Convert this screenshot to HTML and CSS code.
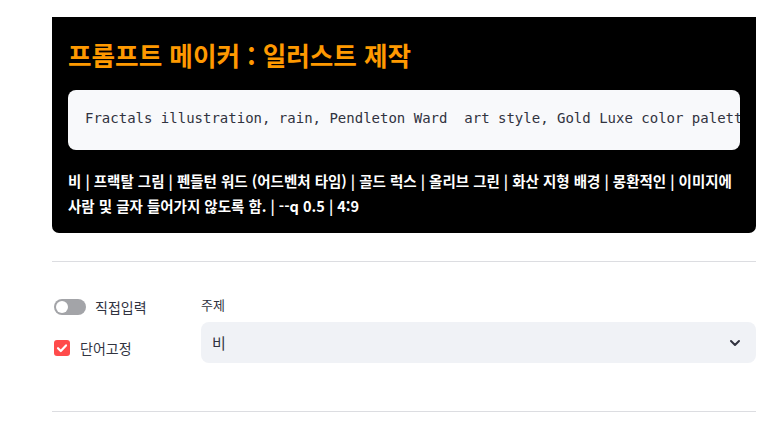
FILE: index.html
```html
<!DOCTYPE html>
<html lang="ko">
<head>
<meta charset="utf-8">
<link rel="stylesheet" href="styles.css">
</head>
<body>
<div class="page">
  <section class="card">
    <h1 class="title">프롬프트 메이커 : 일러스트 제작</h1>
    <pre class="code"><code>Fractals illustration, rain, Pendleton Ward  art style, Gold Luxe color palette, olive green</code></pre>
    <p class="desc">비 | 프랙탈 그림 | 펜들턴 워드 (어드벤처 타임) | 골드 럭스 | 올리브 그린 | 화산 지형 배경 | 몽환적인 | 이미지에 사람 및 글자 들어가지 않도록 함. | --q 0.5 | 4:9</p>
  </section>
  <div class="divider"></div>
  <div class="controls">
    <div class="left">
      <label class="toggle-row">
        <span class="toggle"><span class="knob"></span></span>
        <span class="opt">직접입력</span>
      </label>
      <label class="check-row">
        <span class="checkbox">
          <svg width="16" height="16" viewBox="0 0 16 16"><path d="M4 8.2 L6.8 11 L12 5.4" fill="none" stroke="#fff" stroke-width="2.2" stroke-linecap="round" stroke-linejoin="round"/></svg>
        </span>
        <span class="opt">단어고정</span>
      </label>
    </div>
    <div class="right">
      <div class="label">주제</div>
      <div class="select">
        <span class="value">비</span>
        <svg class="chev" width="12" height="8" viewBox="0 0 12 8"><path d="M2 2 L6 6 L10 2" fill="none" stroke="#31333f" stroke-width="2" stroke-linecap="round" stroke-linejoin="round"/></svg>
      </div>
    </div>
  </div>
  <div class="divider divider2"></div>
</div>
</body>
</html>
```

FILE: styles.css
```css
* { box-sizing: border-box; }
html, body { margin: 0; padding: 0; background: #fff; }
body {
  font-family: "Noto Sans CJK KR", "Noto Sans", sans-serif;
  color: #31333f;
}
.page {
  width: 780px;
  padding: 17px 24px 0 52px;
}
.card {
  background: #000;
  border-radius: 0 0 7px 7px;
  padding: 22px 16px 15px 16px;
}
.title {
  margin: 0;
  color: #ff9900;
  font-size: 25.6px;
  line-height: 31px;
  font-weight: 700;
}
.code {
  margin: 20px 0 0 0;
  background: #f8f9fb;
  border-radius: 8px;
  height: 60px;
  padding: 0 17px 5px 17px;
  overflow: hidden;
  white-space: pre;
  display: flex;
  align-items: center;
}
.code code {
  font-family: "DejaVu Sans Mono", monospace;
  font-size: 14px;
  line-height: 20px;
  color: #31333f;
}
.desc {
  margin: 18px -12px 0 0;
  color: #fff;
  font-size: 14.5px;
  line-height: 25px;
  font-weight: 600;
  word-break: keep-all;
}
.divider {
  height: 1px;
  background: #dcdde1;
  margin-top: 28px;
}
.divider2 { margin-top: 48px; }
.controls {
  margin-top: 35px;
  display: grid;
  grid-template-columns: 133px 1fr;
  column-gap: 16px;
}
.left {
  display: flex;
  flex-direction: column;
  gap: 21px;
}
.toggle-row, .check-row {
  display: flex;
  align-items: center;
  height: 20px;
  font-size: 14px;
}
.toggle {
  width: 32px;
  height: 16px;
  border-radius: 8px;
  background: #a3a4a8;
  padding: 2px;
  display: flex;
  margin-left: 2px;
}
.knob {
  width: 12px;
  height: 12px;
  border-radius: 50%;
  background: #fff;
}
.toggle-row .opt { margin-left: 9px; }
.checkbox {
  width: 16px;
  height: 16px;
  border-radius: 3px;
  background: #ff4b4b;
  margin-left: 2px;
  display: flex;
}
.check-row .opt { margin-left: 10px; }
.opt { color: #31333f; }
.label {
  font-size: 13px;
  line-height: 16px;
  color: #31333f;
  margin-bottom: 9px;
}
.select {
  height: 41px;
  background: #f0f2f6;
  border-radius: 8px;
  display: flex;
  align-items: center;
  justify-content: space-between;
  padding: 0 15px 0 11px;
}
.value { font-size: 15px; color: #31333f; }
```
